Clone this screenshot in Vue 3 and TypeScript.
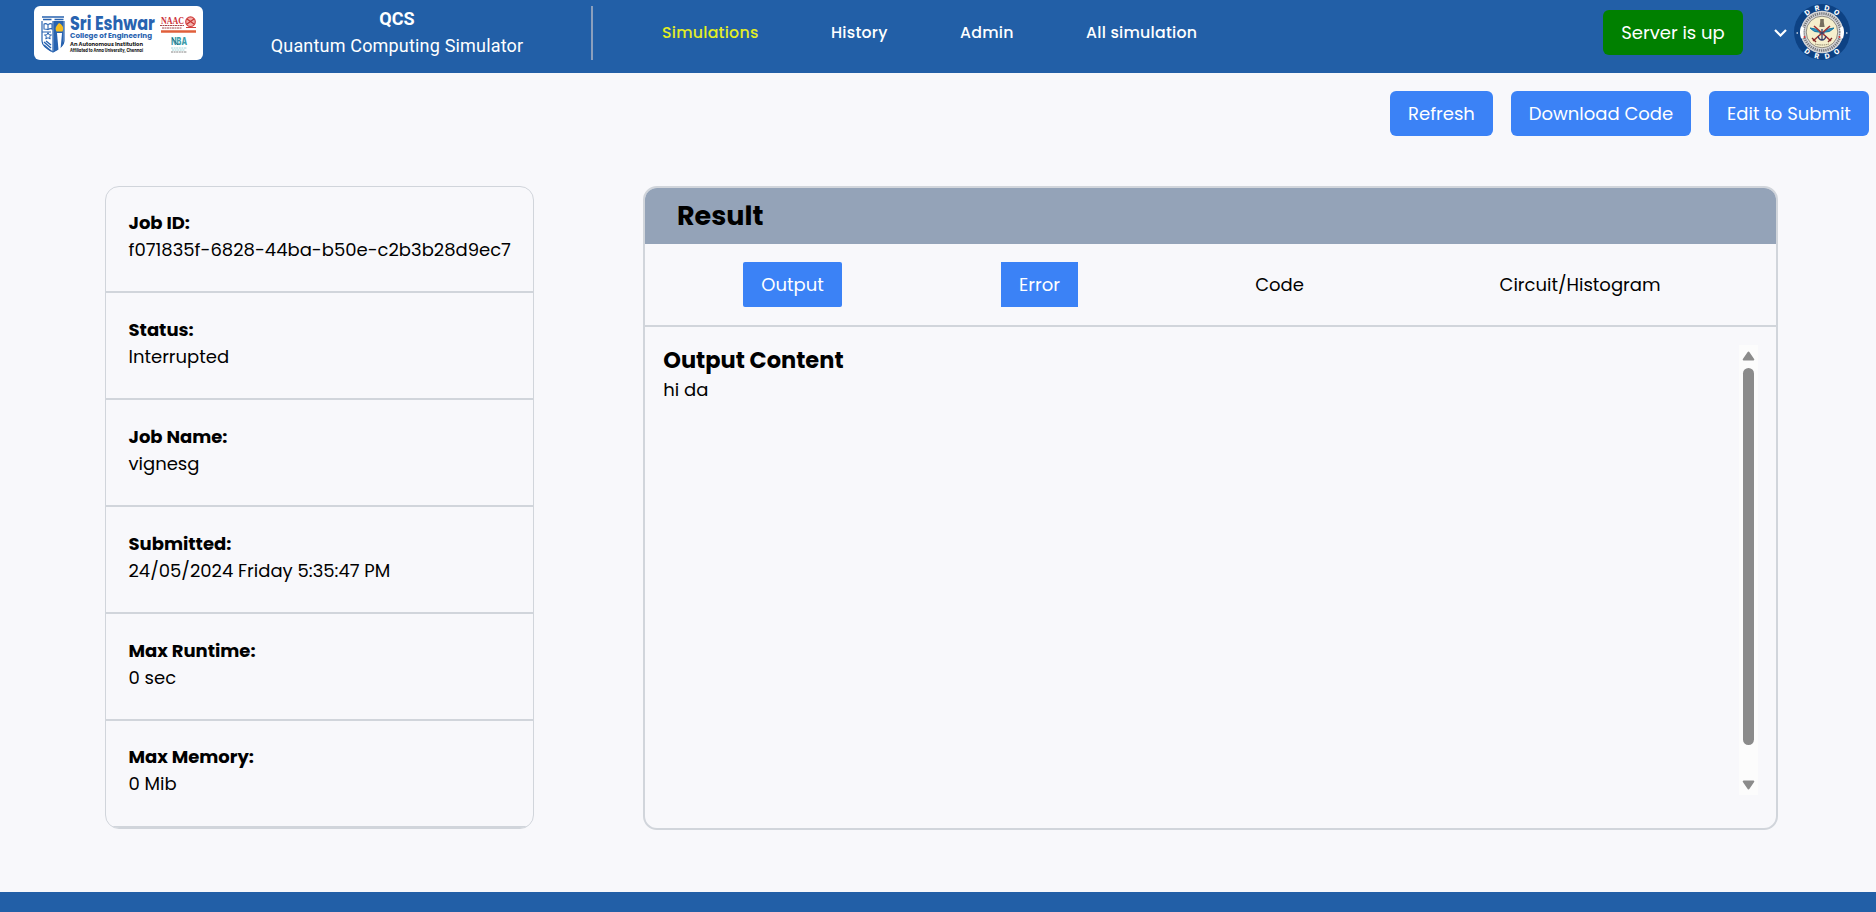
<script setup lang="ts">
import { ref } from 'vue'

interface Field {
  label: string
  value: string
  key: string
}

const navItems: { label: string; key: string }[] = [
  { label: 'Simulations', key: 'simulations' },
  { label: 'History', key: 'history' },
  { label: 'Admin', key: 'admin' },
  { label: 'All simulation', key: 'all' },
]
const activeNav = ref('simulations')

const fields: Field[] = [
  { label: 'Job ID:', value: 'f071835f-6828-44ba-b50e-c2b3b28d9ec7', key: 'id' },
  { label: 'Status:', value: 'Interrupted', key: 'status' },
  { label: 'Job Name:', value: 'vignesg', key: 'name' },
  { label: 'Submitted:', value: '24/05/2024 Friday 5:35:47 PM', key: 'submitted' },
  { label: 'Max Runtime:', value: '0 sec', key: 'runtime' },
  { label: 'Max Memory:', value: '0 Mib', key: 'memory' },
]

const sealLetters = [
  { t: 'D', a: -37 }, { t: 'R', a: -12 }, { t: 'D', a: 12 }, { t: 'O', a: 37 },
]
</script>

<template>
  <div class="page">
    <header class="topbar">
      <div class="logo">
        <svg width="169" height="54" viewBox="0 0 169 54">
          <g fill="none" stroke="#2863b0">
            <path d="M8 11h22M9 13.500h8.500M20.500 13.500h9" stroke-width="1.600" />
            <path d="M8 15v20c0 5 5 8 11 11c6-3 11-6 11-11V15M8 26h9M19 15v30" stroke-width="1.200" />
            <path d="M10 18c2-1 3 0 4 .6c1-.6 2-1.600 4-.6v5c-2-1-3 0-4 .6c-1-.6-2-.6-4-.6zM14 18.600v5" stroke-width="1.100" />
            <path d="M10 36l7 6M10 39l7 6M12 35l5 4" stroke-width="1.500" />
          </g>
          <path d="M14 26.500l1 2.300 2.500.2-1.900 1.600.6 2.400-2.200-1.300-2.200 1.300.6-2.400-1.900-1.600 2.500-.2z" fill="#fff" stroke="#2863b0" />
          <path d="M19.500 15h10v21c0 4-4 7-10 10z" fill="#2863b0" />
          <path d="M23 27h5l-1.500 16-2 1z" fill="#fff" />
          <path d="M25 17c4 2 5 5 3.500 8.500h-6C20.500 22 22.500 20 25 17z" fill="#f4bd20" />
          <g font-family="Poppins, Inter, sans-serif" font-weight="700">
            <text x="36" y="23.600" font-size="18.500" fill="#2863b0" textLength="85" lengthAdjust="spacingAndGlyphs">Sri Eshwar</text>
            <text x="36" y="32" font-size="7.500" fill="#2863b0" textLength="82" lengthAdjust="spacingAndGlyphs">College of Engineering</text>
            <text x="36" y="39.500" font-size="5.300" fill="#222" textLength="73" lengthAdjust="spacingAndGlyphs">An Autonomous Institution</text>
            <text x="36" y="45.500" font-size="4.300" fill="#222" textLength="73" lengthAdjust="spacingAndGlyphs">Affiliated to Anna University, Chennai</text>
          </g>
          <text x="127" y="17.500" font-family="Liberation Serif, serif" font-size="10.500" font-weight="700" fill="#cc3038" textLength="23" lengthAdjust="spacingAndGlyphs">NAAC</text>
          <path d="M126 19.500h24M128 22h20" stroke="#a8484c" stroke-width="1.100" stroke-dasharray="2 .5" />
          <circle cx="156.500" cy="15.700" r="4.800" fill="#f2b1ad" stroke="#d3423f" stroke-width="1.200" />
          <path d="M153 13l7 5M153 18l7-5" stroke="#c83432" stroke-width="1.200" />
          <path d="M152 21.500h10" stroke="#d3423f" stroke-width="1" />
          <path d="M127 25.500h35" stroke="#e05f3b" stroke-width="2.600" />
          <text x="137" y="39.300" font-family="Inter, sans-serif" font-size="10.500" font-weight="800" fill="#3b9cab" textLength="16" lengthAdjust="spacingAndGlyphs">NBA</text>
          <path d="M138 32l6 7" stroke="#28536f" stroke-width=".8" />
          <path d="M137 42h16M138 44h13" stroke="#8acbd1" stroke-width=".8" stroke-dasharray="2 .6" />
          <path d="M137 46h16" stroke="#666" stroke-width=".8" stroke-dasharray="2 .6" />
        </svg>
      </div>
      <div class="brand">
        <strong>QCS</strong>
        <span>Quantum Computing Simulator</span>
      </div>
      <div class="rule"></div>
      <nav class="nav">
        <a v-for="n in navItems" :key="n.key" :class="['nav-' + n.key, { active: activeNav === n.key }]" @click="activeNav = n.key">{{ n.label }}</a>
      </nav>
      <div class="account">
        <div class="server">Server is up</div>
        <svg class="chevron" width="13" height="8" viewBox="0 0 13 8"><path d="M1 1l5.500 5.500L12 1" fill="none" stroke="#fff" stroke-width="2.200" /></svg>
        <svg class="seal" width="56" height="58" viewBox="-28 -29 56 58">
          <circle r="28" fill="#0d4284" />
          <circle r="21.300" fill="#d7d7d9" />
          <circle r="18.500" fill="none" stroke="#77787c" stroke-width="2.600" stroke-dasharray="1.300 .9" />
          <path d="M-19.300-5q-2 5 0 11M19.300-5q2 5 0 11" fill="none" stroke="#fff" stroke-width="3.500" />
          <circle r="15.800" fill="#f5efcd" stroke="#77746c" stroke-width=".8" />
          <path d="M-12-4q6 0 10 4q-6 1-10-4zM12-4q-6 0-10 4q6 1 10-4z" fill="#3191c5" stroke="#1d789e" />
          <path d="M-9 9L8-6M9 9L-8-6" stroke="#a43232" stroke-width="1.600" />
          <path d="M-10 6l4 4M10 6l-4 4" stroke="#7a2929" stroke-width="1.400" />
          <path d="M0-3V8M-4 4q1 4 4 4t4-4M-2.500 1h5" fill="none" stroke="#38406a" stroke-width="1.300" />
          <path d="M-1.800-13h3.600v3l.8 5h-5.200l.8-5z" fill="#776f5e" />
          <path d="M-7 12q7 2 14 0" fill="none" stroke="#8a8169" stroke-dasharray="1.500 .7" />
          <circle cx="-17.500" cy="5" r="1" fill="#d33" /><circle cx="17.500" cy="5" r="1" fill="#d33" />
          <circle cx="-24.800" cy="1" r=".8" fill="#fff" /><circle cx="24.800" cy="1" r=".8" fill="#fff" />
          <g font-family="Inter, sans-serif" font-size="7" font-weight="800" fill="#fff" text-anchor="middle">
            <text v-for="l in sealLetters" :key="'t' + l.a" y="-22" :transform="`rotate(${l.a})`">{{ l.t }}</text>
            <text v-for="l in sealLetters" :key="'b' + l.a" y="27" :transform="`rotate(${-l.a})`">{{ l.t }}</text>
          </g>
        </svg>
      </div>
    </header>

    <div class="actions">
      <button class="btn refresh">Refresh</button>
      <button class="btn download">Download Code</button>
      <button class="btn edit">Edit to Submit</button>
    </div>

    <main class="content">
      <section class="details">
        <div v-for="f in fields" :key="f.key" class="field" :class="'field-' + f.key">
          <div class="label">{{ f.label }}</div>
          <div class="value">{{ f.value }}</div>
        </div>
      </section>

      <section class="result">
        <h2>Result</h2>
        <div class="tabs">
          <button class="tab tab-output">Output</button>
          <button class="tab tab-error">Error</button>
          <button class="tab tab-code">Code</button>
          <button class="tab tab-circuit">Circuit/Histogram</button>
        </div>
        <div class="panel">
          <div class="output">
            <h3>Output Content</h3>
            <p>hi da</p>
          </div>
          <div class="scrollbar">
            <svg width="13" height="10" viewBox="0 0 13 10"><path d="M6.500 1.500L11.300 8.500H1.700z" fill="#8b8b8b" stroke="#8b8b8b" stroke-width="2" stroke-linejoin="round" /></svg>
            <div class="thumb"></div>
            <svg class="down" width="13" height="10" viewBox="0 0 13 10"><path d="M1.700 1.500h9.600L6.500 8.500z" fill="#8b8b8b" stroke="#8b8b8b" stroke-width="2" stroke-linejoin="round" /></svg>
          </div>
        </div>
      </section>
    </main>
    <footer class="footer"></footer>
  </div>
</template>

<style>
body { margin: 0; background: #f8f8fb; overflow: hidden; }
</style>

<style scoped>
* { box-sizing: border-box; }
.page {
  width: 1876px; height: 912px; display: flex; flex-direction: column;
  background: #f8f8fb; color: #000;
  font: 400 18px/27px Poppins, Inter, sans-serif;
  font-feature-settings: 'cv11' 1;
  white-space: nowrap;
}
h2, h3, p { margin: 0; }
button { border: 0; font: inherit; font-feature-settings: inherit; color: inherit; background: none; white-space: nowrap; padding: 0; }
.topbar { height: 73px; flex: none; display: flex; align-items: flex-start; background: #225fa7; color: #fff; }
.logo { width: 169px; height: 54px; margin: 6px 0 0 34px; background: #fff; border-radius: 6px; overflow: hidden; }
.logo svg { display: block; }
.brand { width: 388px; padding-top: 5px; display: flex; flex-direction: column; align-items: center; font-family: Roboto, sans-serif; }
.brand span { letter-spacing: .18px; }
.rule { width: 2px; height: 54px; margin-top: 6px; background: #8b9fbd; }
.nav { display: flex; font-size: 15.75px; font-weight: 500; letter-spacing: .25px; padding-top: 19px; }
.nav a { width: 0; }
.nav a.active { color: #e3ed24; }
.nav .nav-simulations { margin-left: 69px; }
.nav .nav-history { margin-left: 169px; }
.nav .nav-admin { margin-left: 129px; }
.nav .nav-all { margin-left: 126px; }
.account { margin: 0 26px 0 auto; display: flex; align-items: flex-start; }
.server { width: 140px; height: 45px; margin-top: 10px; line-height: 45px; text-align: center; border-radius: 6px; background: #008000; }
.chevron { margin: 29px 7px 0 31px; }
.seal { margin-top: 3px; }
.actions { height: 45px; margin: 18px 7px 0 0; display: flex; justify-content: flex-end; gap: 18px; }
.btn { height: 45px; border-radius: 6px; background: #3b82f6; color: #fff; }
.refresh { width: 103px; }
.download { width: 180px; }
.edit { width: 160px; }
.content { display: flex; margin: 50px 98px 0 105px; justify-content: space-between; flex: none; }
.details { width: 429px; height: 643px; border: 1px solid #d1d5db; border-radius: 14px; overflow: hidden; }
.field { height: 107px; border-bottom: 2px solid #d1d5db; padding: 23px 0 0 22.5px; }
.field:first-child { height: 106px; padding-top: 22px; }
.field:last-child { padding-top: 22px; }
.label { font-weight: 700; }
.result { width: 1135px; height: 644px; border: 2px solid #d1d5db; border-radius: 14px; overflow: hidden; }
.result h2 { height: 56px; padding-left: 32px; font-size: 27px; line-height: 56px; background: #94a3b8; }
.tabs { height: 83px; display: flex; padding: 18px 0 0 98px; border-bottom: 2px solid #d1d5db; }
.tab { height: 45px; }
.tab-output, .tab-error { background: #3b82f6; color: #fff; }
.tab-output { width: 99px; border-radius: 2px; }
.tab-error { width: 77px; margin-left: 159px; }
.tab-code { width: 50px; margin-left: 176.5px; }
.tab-circuit { width: 162px; margin-left: 194.5px; }
.panel { height: 501px; padding: 18px 18px 33px; display: flex; justify-content: space-between; }
.output { padding-left: .25px; }
.output h3 { font-size: 22.5px; line-height: 31px; }
.scrollbar { width: 19px; height: 450px; display: flex; flex-direction: column; align-items: center; background: #fcfcfc; padding: 6px 0 5px; }
.scrollbar svg { flex: none; }
.thumb { width: 11px; height: 377px; margin-top: 7px; border-radius: 6px; background: #8b8b8b; }
.down { margin-top: auto; }
.footer { height: 20px; margin-top: auto; background: #225fa7; flex: none; }
</style>
